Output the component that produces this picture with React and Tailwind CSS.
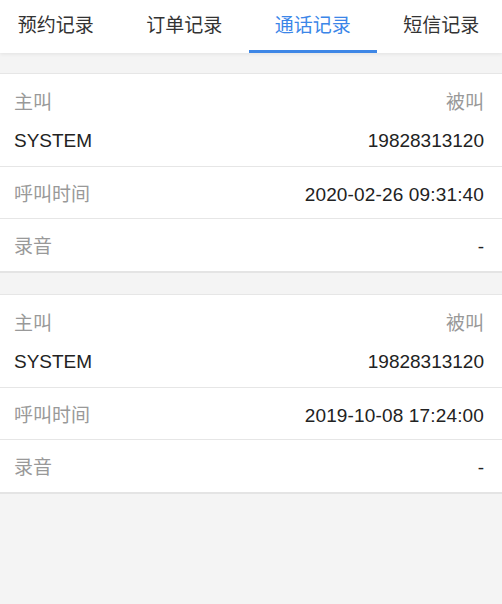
import React from "react";

const tabs = ["预约记录", "订单记录", "通话记录", "短信记录"];
const records = [
  { caller: "SYSTEM", callee: "19828313120", time: "2020-02-26 09:31:40", rec: "-" },
  { caller: "SYSTEM", callee: "19828313120", time: "2019-10-08 17:24:00", rec: "-" },
];

function Card({ r }) {
  return (
    <div className="bg-white border-t border-[#e6e6e6] border-b-2 border-b-[#e4e4e4]">
      <div className="pt-[15px] pb-[11px] pl-[14px] pr-[18px] border-b border-[#e6e6e6]">
        <div className="flex justify-between leading-[28px] text-[#999999]">
          <span>主叫</span>
          <span>被叫</span>
        </div>
        <div className="flex justify-between leading-[28px] mt-[10px] text-[#222222]">
          <span>{r.caller}</span>
          <span>{r.callee}</span>
        </div>
      </div>
      <div className="h-[52px] pt-[6px] flex items-center justify-between pl-[14px] pr-[18px] border-b border-[#e6e6e6]">
        <span className="text-[#999999]">呼叫时间</span>
        <span className="text-[#222222] tracking-[0.15px]">{r.time}</span>
      </div>
      <div className="h-[52px] pt-[5px] flex items-center justify-between pl-[14px] pr-[18px]">
        <span className="text-[#999999]">录音</span>
        <span className="text-[#222222]">{r.rec}</span>
      </div>
    </div>
  );
}

export default function App() {
  return (
    <div
      className="min-h-[604px] bg-[#f4f4f4] overflow-hidden text-[19px]"
      style={{ fontFamily: '"Liberation Sans", "Noto Sans CJK SC", sans-serif' }}
    >
      <div className="h-[53px] bg-white overflow-hidden shadow-[0_1px_4px_rgba(0,0,0,0.08)] relative z-10">
        <div className="flex ml-[-8.5px] h-full">
          {tabs.map((t, i) => (
            <div
              key={t}
              className={
                "shrink-0 w-[128.5px] h-full flex items-center justify-center pb-[0px] relative " +
                (i === 2 ? "text-[#3b86e8]" : "text-[#333333]")
              }
            >
              {t}
              {i === 2 && (
                <div className="absolute left-0 right-0 bottom-0 h-[3px] bg-[#3e87e6]" />
              )}
            </div>
          ))}
        </div>
      </div>
      <div className="mt-[20px] flex flex-col gap-[21px]">
        {records.map((r, i) => (
          <Card key={i} r={r} />
        ))}
      </div>
    </div>
  );
}
